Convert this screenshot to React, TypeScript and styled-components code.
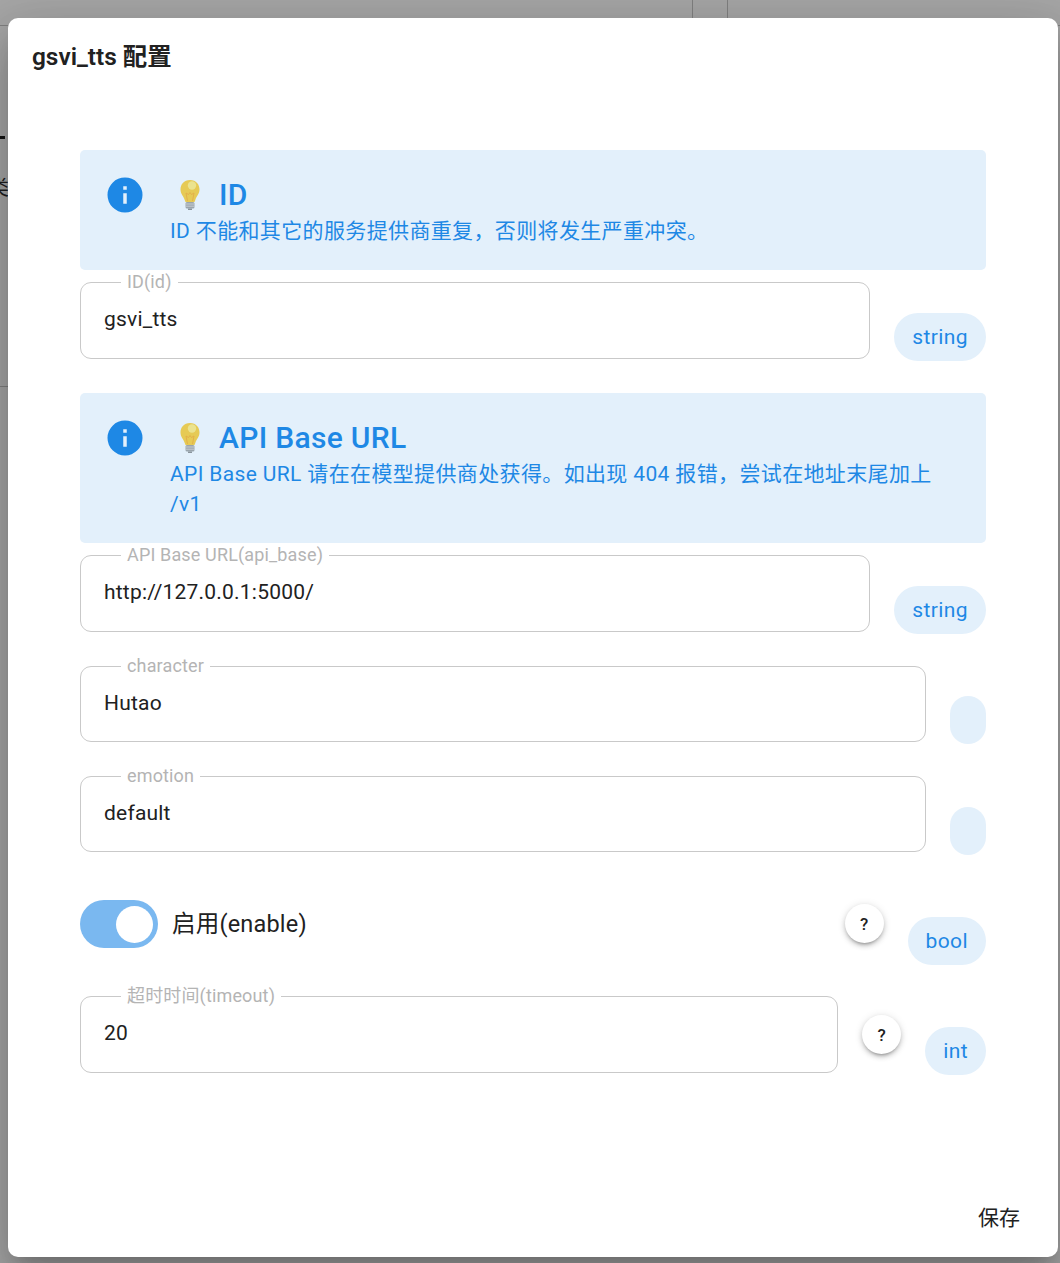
import React from 'react';
import styled, { createGlobalStyle } from 'styled-components';

const GlobalStyle = createGlobalStyle`
  html, body {
    margin: 0;
    padding: 0;
    height: 100%;
  }
  body {
    font-family: Roboto, "Noto Sans CJK SC", sans-serif;
    color: #212121;
    overflow: hidden;
  }
`;

const Page = styled.div`
  position: relative;
  box-sizing: border-box;
  width: 1060px;
  height: 1263px;
  padding: 18px 2px 6px 8px;
  background: #a6a6a6;
  overflow: hidden;
`;

const BackdropLine = styled.i<{ $vertical?: boolean; $x: number; $y: number; $length: number }>`
  position: absolute;
  left: ${(p) => p.$x}px;
  top: ${(p) => p.$y}px;
  width: ${(p) => (p.$vertical ? 1 : p.$length)}px;
  height: ${(p) => (p.$vertical ? p.$length : 1)}px;
  background: #808080;
`;

const BackdropGlyph = styled.span`
  position: absolute;
  left: -11px;
  top: 176px;
  font-size: 20px;
  line-height: 24px;
  color: #1d1d1d;
`;

const BackdropDash = styled.i`
  position: absolute;
  left: 0;
  top: 136px;
  width: 5px;
  height: 3px;
  background: #141414;
`;

const Dialog = styled.div`
  position: relative;
  display: flex;
  flex-direction: column;
  box-sizing: border-box;
  height: 100%;
  background: #fff;
  border-radius: 10px;
  box-shadow: 0 14px 19px -9px rgba(0, 0, 0, 0.2), 0 30px 48px 4px rgba(0, 0, 0, 0.14),
    0 11px 58px 10px rgba(0, 0, 0, 0.12);
`;

const Title = styled.h2`
  margin: 0;
  padding: 21px 24px 19px;
  font-size: 24.4px;
  line-height: 36px;
  font-weight: 600;
  letter-spacing: 0;
  color: #212121;
`;

const Body = styled.div`
  flex: 1;
  padding: 56px 72px 0;
`;

const Alert = styled.div`
  display: flex;
  gap: 24px;
  padding: 24px;
  margin-bottom: 4px;
  background: #e3f0fb;
  border-radius: 5px;
  color: #1e88e5;
`;

const AlertIcon = styled.svg`
  flex: none;
  width: 42px;
  height: 42px;
  fill: #1e88e5;
`;

const AlertContent = styled.div`
  flex: 1;
  min-width: 0;
`;

const AlertTitle = styled.div`
  display: flex;
  align-items: center;
  height: 42px;
  font-size: 30px;
  font-weight: 500;
  line-height: 42px;
  letter-spacing: 0.3px;
`;

const Bulb = styled.svg`
  flex: none;
  width: 24px;
  height: 32px;
  margin: 0 17px 0 8px;
`;

const AlertText = styled.div`
  font-size: 21px;
  line-height: 30px;
  letter-spacing: 0.36px;
`;

const Row = styled.div<{ $below?: number }>`
  display: flex;
  align-items: flex-start;
  gap: 24px;
  margin-bottom: ${(p) => p.$below ?? 24}px;
`;

const Field = styled.fieldset<{ $short?: boolean }>`
  flex: 1;
  min-width: 0;
  margin: 0;
  padding: 14px 23px ${(p) => (p.$short ? 23 : 24)}px;
  border: 1px solid #c9c9c9;
  border-radius: 11px;
`;

const FieldLabel = styled.legend`
  margin-left: 17px;
  padding: 0 6px;
  font-size: 18px;
  line-height: 16px;
  letter-spacing: 0.15px;
  color: #b4b4b4;
`;

const FieldValue = styled.div`
  font-size: 21px;
  line-height: 30px;
  letter-spacing: 0.2px;
  color: #212121;
`;

const Chip = styled.span<{ $top: number }>`
  flex: none;
  box-sizing: border-box;
  height: 48px;
  min-width: 36px;
  margin-top: ${(p) => p.$top}px;
  padding: 0 18px;
  border-radius: 24px;
  background: #e3f0fb;
  color: #1e88e5;
  font-size: 21px;
  line-height: 48px;
  letter-spacing: 0.4px;
`;

const HelpButton = styled.button<{ $top: number }>`
  flex: none;
  width: 39px;
  height: 39px;
  margin-top: ${(p) => p.$top}px;
  padding: 0;
  border: 0;
  border-radius: 50%;
  background: #fff;
  color: #212121;
  font-family: inherit;
  font-size: 17px;
  font-weight: 500;
  box-shadow: 0 3px 3px -2px rgba(0, 0, 0, 0.25), 0 3px 5px 0 rgba(0, 0, 0, 0.17),
    0 1px 8px 0 rgba(0, 0, 0, 0.12);
`;

const SwitchLabel = styled.div`
  flex: 1;
  display: flex;
  align-items: center;
  gap: 14px;
  height: 48px;
  font-size: 23.500px;
  letter-spacing: 0.2px;
  color: #212121;
`;

const SwitchText = styled.span`
  margin-bottom: 4px;
`;

const SwitchTrack = styled.span`
  display: flex;
  justify-content: flex-end;
  align-items: center;
  box-sizing: border-box;
  width: 78px;
  height: 48px;
  padding-right: 5px;
  border-radius: 24px;
  background: #7ab8f0;
`;

const SwitchThumb = styled.span`
  width: 37px;
  height: 37px;
  border-radius: 50%;
  background: #fff;
`;

const Footer = styled.div`
  display: flex;
  justify-content: flex-end;
  padding: 0 38px 24px;
`;

const SaveButton = styled.button`
  padding: 0;
  border: 0;
  background: none;
  color: #212121;
  font-family: inherit;
  font-size: 21px;
  line-height: 30px;
`;

const BulbIcon = () => (
  <Bulb viewBox="0 0 24 32">
    <path d="M12 1C5.8 1 2.500 5.600 2.500 10.600c0 4.400 3 6.600 4.200 10.400L7.500 23h9l.8-2c1.200-3.800 4.200-6 4.200-10.400C21.500 5.600 18.200 1 12 1Z" fill="#e6ca55" />
    <circle cx="14" cy="6.500" r="4.200" fill="#ebe38f" />
    <path d="M9.500 22l-1.500-8 2.500 1.500 1.500-2 1.500 2 2.500-1.500-1.500 8" fill="none" stroke="#e3b04a" strokeWidth="1" />
    <rect x="7.500" y="23" width="9" height="6.500" rx="1.500" fill="#9aa5ad" />
    <path d="M7.500 25h9M7.500 27.200h9" stroke="#d3d8da" strokeWidth="0.800" />
    <rect x="10" y="29.500" width="4" height="1.500" fill="#8a949b" />
  </Bulb>
);

const InfoIcon = () => (
  <AlertIcon viewBox="0 0 24 24">
    <path d="M13,9H11V7H13M13,17H11V11H13M12,2A10,10 0 0,0 2,12A10,10 0 0,0 12,22A10,10 0 0,0 22,12A10,10 0 0,0 12,2Z" />
  </AlertIcon>
);

interface IHintProps {
  title: string;
  text: string;
}

const Hint: React.FunctionComponent<IHintProps> = ({ title, text }) => (
  <Alert>
    <InfoIcon />
    <AlertContent>
      <AlertTitle>
        <BulbIcon />
        {title}
      </AlertTitle>
      <AlertText>{text}</AlertText>
    </AlertContent>
  </Alert>
);

interface IConfigFieldProps {
  label: string;
  value: string;
  type?: string;
  chipTop: number;
  help?: boolean;
  below?: number;
  short?: boolean;
}

const ConfigField: React.FunctionComponent<IConfigFieldProps> = ({
  label,
  value,
  type,
  chipTop,
  help,
  below,
  short,
}) => (
  <Row $below={below}>
    <Field $short={short}>
      <FieldLabel>{label}</FieldLabel>
      <FieldValue>{value}</FieldValue>
    </Field>
    {help && <HelpButton $top={27}>?</HelpButton>}
    <Chip $top={chipTop}>{type}</Chip>
  </Row>
);

const App: React.FunctionComponent = () => (
  <Page>
    <GlobalStyle />
    <BackdropLine $vertical $x={692} $y={0} $length={18} />
    <BackdropLine $vertical $x={727} $y={0} $length={18} />
    <BackdropLine $x={0} $y={25} $length={8} />
    <BackdropLine $x={1058} $y={25} $length={2} />
    <BackdropLine $x={0} $y={386} $length={8} />
    <BackdropDash />
    <BackdropGlyph>类</BackdropGlyph>
    <Dialog>
      <Title>gsvi_tts 配置</Title>
      <Body>
        <Hint title="ID" text="ID 不能和其它的服务提供商重复，否则将发生严重冲突。" />
        <ConfigField label="ID(id)" value="gsvi_tts" type="string" chipTop={39} below={32} />
        <Hint
          title="API Base URL"
          text="API Base URL 请在在模型提供商处获得。如出现 404 报错，尝试在地址末尾加上 /v1"
        />
        <ConfigField label="API Base URL(api_base)" value="http://127.0.0.1:5000/" type="string" chipTop={39} />
        <ConfigField label="character" value="Hutao" chipTop={38} short />
        <ConfigField label="emotion" value="default" chipTop={39} below={45} short />
        <Row $below={23}>
          <SwitchLabel>
            <SwitchTrack>
              <SwitchThumb />
            </SwitchTrack>
            <SwitchText>启用(enable)</SwitchText>
          </SwitchLabel>
          <HelpButton $top={4}>?</HelpButton>
          <Chip $top={17}>bool</Chip>
        </Row>
        <ConfigField label="超时时间(timeout)" value="20" type="int" chipTop={39} help />
      </Body>
      <Footer>
        <SaveButton>保存</SaveButton>
      </Footer>
    </Dialog>
  </Page>
);

export default App;
